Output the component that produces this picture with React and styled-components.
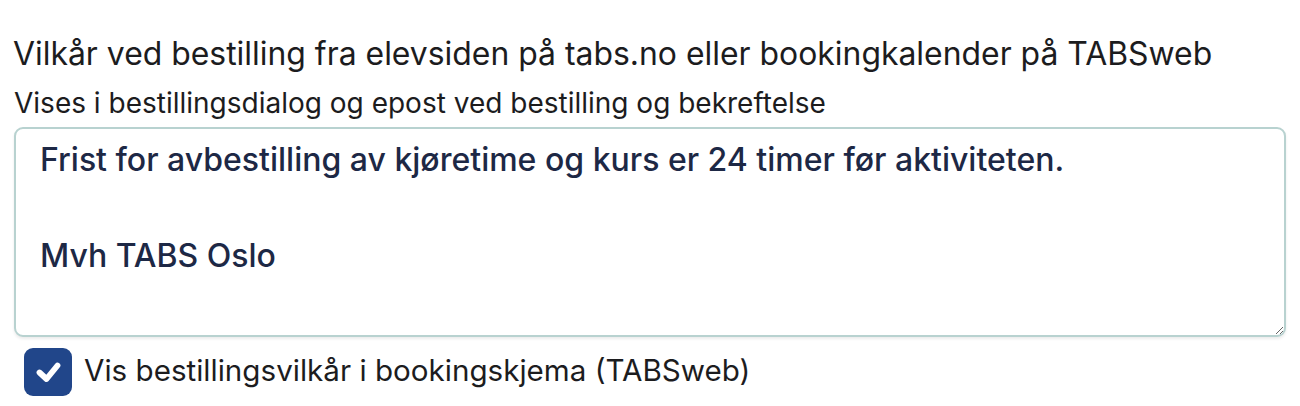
import React from 'react';
import styled, { createGlobalStyle } from 'styled-components';

const GlobalStyle = createGlobalStyle`
  body {
    margin: 0;
    background: #fff;
    font-family: Inter, "Noto Sans", sans-serif;
  }
`;

const Wrapper = styled.div`
  padding: 35px 14px 0 14px;
  display: flex;
  flex-direction: column;
`;

const Title = styled.div`
  font-size: 31.9px;
  line-height: 38px;
  color: #1c1c1e;
  margin-left: -1px;
  margin-bottom: 12px;
  white-space: nowrap;
`;

const Hint = styled.div`
  font-size: 28px;
  line-height: 36px;
  color: #1c1c1e;
  white-space: nowrap;
`;

const TextArea = styled.textarea`
  box-sizing: border-box;
  width: 100%;
  height: 210px;
  margin: 6px 0 0;
  padding: 7px 24px;
  border: 2px solid #b8d2d0;
  border-radius: 9px;
  box-shadow: 0 2px 3px rgba(0, 0, 0, 0.08);
  font-family: Inter, "Noto Sans", sans-serif;
  font-size: 32px;
  font-weight: 500;
  line-height: 48px;
  color: #1d2845;
  resize: vertical;
  outline: none;
  display: block;
`;

const CheckRow = styled.label`
  display: flex;
  align-items: center;
  gap: 12px;
  margin-top: 11px;
  margin-left: 10px;
  font-size: 29.6px;
  line-height: 36px;
  color: #1c1c1e;
  white-space: nowrap;
`;

const Box = styled.span`
  flex: none;
  width: 48px;
  height: 48px;
  border-radius: 9px;
  background: #21468a;
  display: flex;
  align-items: center;
  justify-content: center;
`;

const Label = styled.span`
  padding-bottom: 4px;
`;

const App = () => (
  <>
    <GlobalStyle />
    <Wrapper>
      <Title>Vilkår ved bestilling fra elevsiden på tabs.no eller bookingkalender på TABSweb</Title>
      <Hint>Vises i bestillingsdialog og epost ved bestilling og bekreftelse</Hint>
      <TextArea
        defaultValue={'Frist for avbestilling av kjøretime og kurs er 24 timer før aktiviteten.\n\nMvh TABS Oslo'}
      />
      <CheckRow>
        <Box>
          <svg width="48" height="48" viewBox="0 0 48 48" fill="none">
            <path d="M15.5 24.5l7 6.5L33.5 17.5" stroke="#fff" strokeWidth="5.8" strokeLinecap="round" strokeLinejoin="round" />
          </svg>
        </Box>
        <Label>Vis bestillingsvilkår i bookingskjema (TABSweb)</Label>
      </CheckRow>
    </Wrapper>
  </>
);

export default App;
